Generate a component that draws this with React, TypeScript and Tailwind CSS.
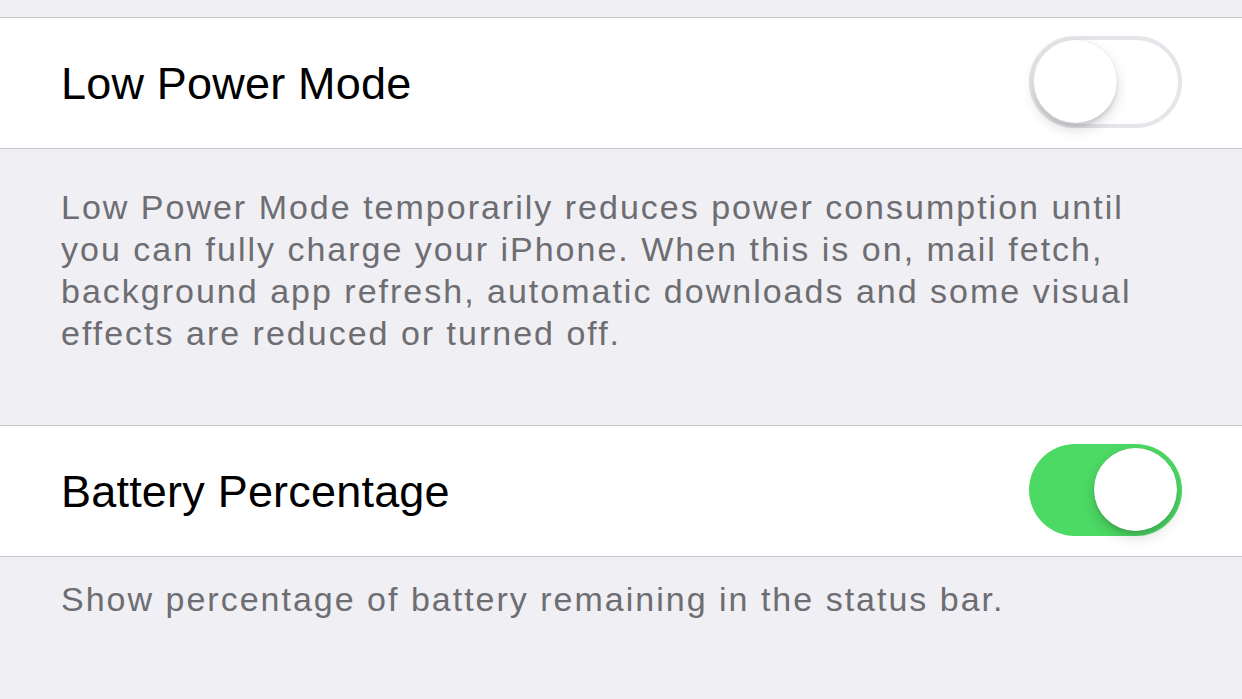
const font = { fontFamily: '"Liberation Sans", Arial, sans-serif' };

const Toggle = ({ on }: { on: boolean }) => (
  <div
    className={
      on
        ? "mb-[3px] flex h-[92px] w-[153px] items-center justify-end rounded-full bg-[#4cd964] p-[5px]"
        : "mb-[3px] flex h-[92px] w-[153px] items-center justify-start rounded-full border-[4px] border-[#e5e5ea] bg-white p-[1px]"
    }
  >
    <div className="h-[83px] w-[83px] rounded-full bg-white shadow-[0_4px_3px_rgba(0,0,0,0.08),0_6px_14px_rgba(0,0,0,0.16),0_0_0_0.5px_rgba(0,0,0,0.06)]" />
  </div>
);

const Row = ({ label, on }: { label: string; on: boolean }) => (
  <div className="flex h-[132px] items-center justify-between border-y border-[#c8c7cc] bg-white pl-[61px] pr-[60px]">
    <span className="text-[45px] leading-none tracking-[0.2px] text-black">{label}</span>
    <Toggle on={on} />
  </div>
);

export default function App() {
  return (
    <div className="h-[699px] w-[1242px] overflow-hidden bg-[#efeff4]" style={font}>
      <div className="h-[17px]" />
      <Row label="Low Power Mode" on={false} />
      <p className="whitespace-nowrap px-[61px] pb-[71px] pt-[37px] text-[34px] leading-[42px] tracking-[2px] text-[#6d6d72]">
        Low Power Mode temporarily reduces power consumption until
        <br />
        you can fully charge your iPhone. When this is on, mail fetch,
        <br />
        background app refresh, automatic downloads and some visual
        <br />
        effects are reduced or turned off.
      </p>
      <Row label="Battery Percentage" on={true} />
      <p className="whitespace-nowrap px-[61px] pt-[21px] text-[34px] leading-[42px] tracking-[2px] text-[#6d6d72]">
        Show percentage of battery remaining in the status bar.
      </p>
    </div>
  );
}
